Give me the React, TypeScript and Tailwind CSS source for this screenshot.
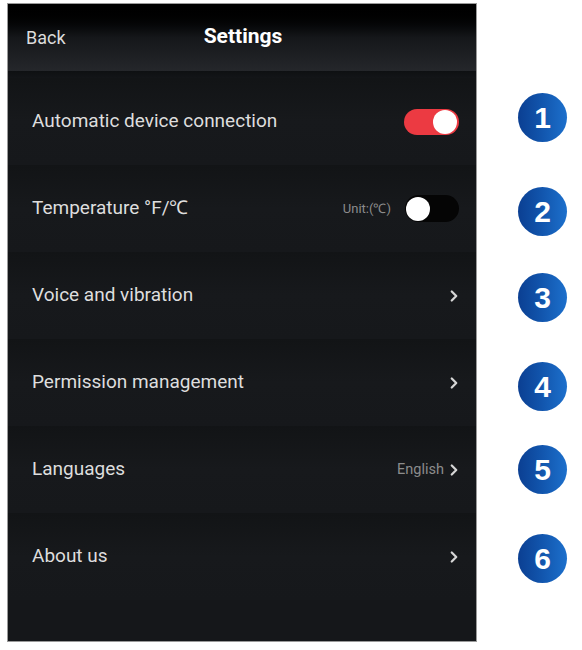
import { ChevronRight } from 'lucide-react';

type Row = {
  label: string;
  right: 'toggleOn' | 'toggleOff' | 'chevron';
  hint?: string;
};

const rows: Row[] = [
  { label: 'Automatic device connection', right: 'toggleOn' },
  { label: 'Temperature °F/℃', right: 'toggleOff', hint: 'Unit:(℃)' },
  { label: 'Voice and vibration', right: 'chevron' },
  { label: 'Permission management', right: 'chevron' },
  { label: 'Languages', right: 'chevron', hint: 'English' },
  { label: 'About us', right: 'chevron' },
];

// top margins of the numbered badges, they don't sit on an even grid
const badgeGaps = ['mt-[93px]', 'mt-[45px]', 'mt-[37px]', 'mt-[40px]', 'mt-[34px]', 'mt-[40px]'];

function Toggle({ on }: { on: boolean }) {
  return (
    <div
      className={
        on
          ? 'w-[55px] h-[26px] rounded-full bg-[#ec3a42] flex items-center justify-end px-[2px]'
          : 'w-[54px] h-[27px] rounded-full bg-[#050505] flex items-center justify-start px-[1px]'
      }
    >
      <div className="w-[24px] h-[24px] rounded-full bg-white" />
    </div>
  );
}

function SettingsRow({ row }: { row: Row }) {
  return (
    <div className="h-[87px] flex items-center justify-between pl-[24px] pr-[17px] bg-gradient-to-b from-[#121416] via-[#17191c] to-[#16181b]">
      <span className="text-[19px] text-[#dedede]">{row.label}</span>
      <div className="flex items-center">
        {row.hint && (
          <span className={row.right === 'chevron' ? 'text-[14.5px] text-[#8c8c8c] mr-[1px]' : 'text-[13px] text-[#8c8c8c] mr-[14px]'}>
            {row.hint}
          </span>
        )}
        {row.right === 'toggleOn' && <Toggle on />}
        {row.right === 'toggleOff' && <Toggle on={false} />}
        {row.right === 'chevron' && <ChevronRight className="w-[18px] h-[18px] text-[#d6d6d6] -mr-[4px]" strokeWidth={3} />}
      </div>
    </div>
  );
}

export default function App() {
  return (
    <div className="w-[582px] h-[650px] bg-white flex font-['Roboto','Liberation_Sans',sans-serif]">
      <div className="ml-[7px] mt-[3px] w-[470px] h-[639px] border border-[#9a9a9a] bg-[#15171a] flex flex-col">
        <header className="h-[67px] relative flex items-center justify-center bg-gradient-to-b from-[#000000] via-[#15171a] to-[#25272b]">
          <span className="absolute left-[18px] top-[20px] text-[18px] text-[#dcdcdc]">Back</span>
          <span className="text-[21px] font-bold text-white -mt-[2px] ml-[2px]">Settings</span>
        </header>
        <div className="h-[7px] bg-gradient-to-b from-[#0e1012] to-[#131518]" />
        {rows.map((r) => (
          <SettingsRow key={r.label} row={r} />
        ))}
      </div>
      <div className="ml-[41px] flex flex-col">
        {badgeGaps.map((m, i) => (
          <div
            key={i}
            className={`${m} w-[49px] h-[49px] rounded-full bg-gradient-to-r from-[#0b3f92] via-[#1256ae] to-[#1d70cc] flex items-center justify-center`}
          >
            <span className="text-white font-bold text-[30px] leading-none font-['Liberation_Sans',sans-serif]">{i + 1}</span>
          </div>
        ))}
      </div>
    </div>
  );
}
